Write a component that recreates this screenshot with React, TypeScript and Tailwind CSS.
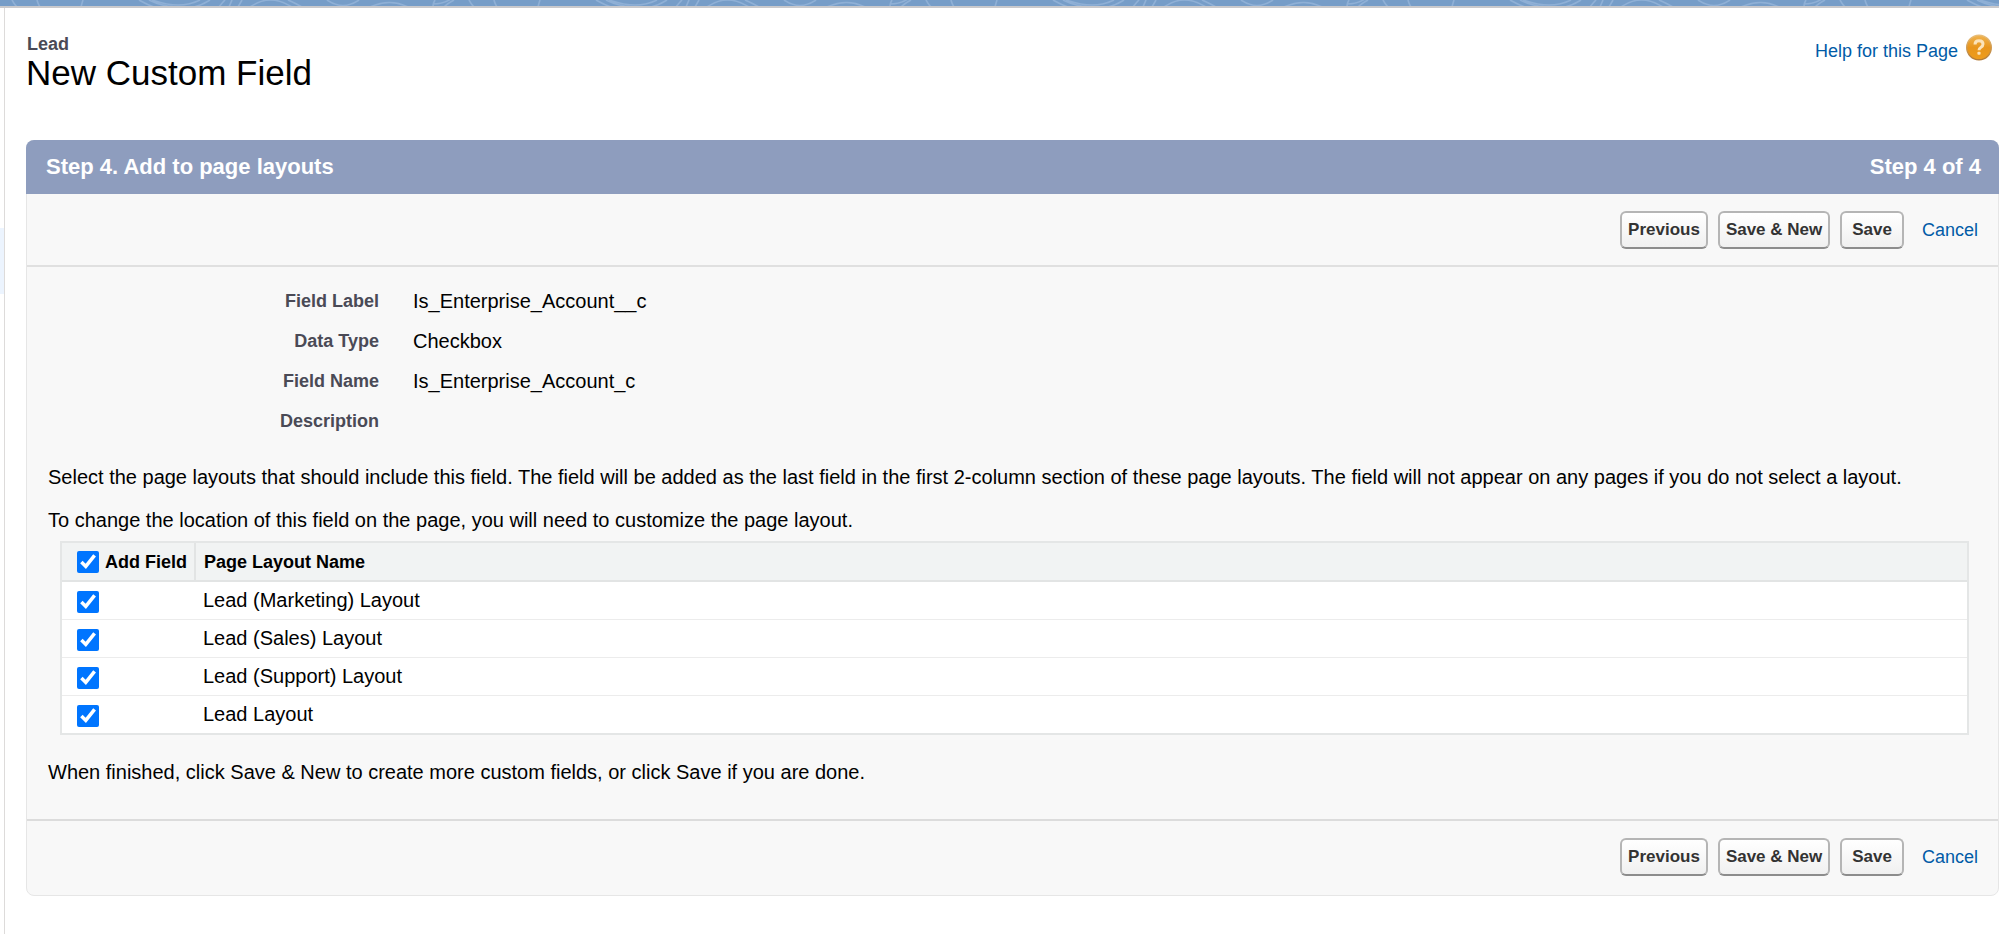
import { useState } from "react";

const details = [
  { label: "Field Label", value: "Is_Enterprise_Account__c" },
  { label: "Data Type", value: "Checkbox" },
  { label: "Field Name", value: "Is_Enterprise_Account_c" },
  { label: "Description", value: "" },
];

const layouts = [
  "Lead (Marketing) Layout",
  "Lead (Sales) Layout",
  "Lead (Support) Layout",
  "Lead Layout",
];

const Banner = () => (
  <svg className="block h-2 w-full border-b-2 border-[#c9c9cc] bg-[#769dc8]" aria-hidden="true">
    <defs>
      <pattern id="contours" width="457" height="6" patternUnits="userSpaceOnUse">
        <g fill="none" stroke="#8fb0d6" strokeWidth="1.6">
          <path d="M12 0q2 4 5 7M37 0q1 4 3 7M83 0q-1 3-2 7" />
          <path d="M139 0q9 5 15 7M149 0q14 7 30 7M152 0q28 10 48 0M210 0q-8 5-16 7M219 7q3-4 6-7M229 7l3-7M238 7l4-7" />
          <path d="M250 7q20-14 42 0M288 0q7 3 14 7M327 0q16 11 32 0M370 7q20-9 38 0" />
          <path d="M433 7q0-4 2-7M433 4q10 0 18-5M444 7q4-4 10-7" />
        </g>
      </pattern>
    </defs>
    <rect width="100%" height="6" fill="url(#contours)" />
  </svg>
);

const HelpIcon = () => (
  <svg width="26" height="27" viewBox="0 0 26 27" aria-hidden="true">
    <defs>
      <linearGradient id="help" x1="0" y1="0" x2="0" y2="1">
        <stop offset="0" stopColor="#f0b450" />
        <stop offset="0.5" stopColor="#e8951c" />
        <stop offset="1" stopColor="#ef9d1c" />
      </linearGradient>
      <linearGradient id="help-rim" x1="0" y1="0" x2="0" y2="1">
        <stop offset="0" stopColor="#e9bd76" />
        <stop offset="1" stopColor="#b37a35" />
      </linearGradient>
    </defs>
    <circle cx="13" cy="13.5" r="12.3" fill="url(#help)" stroke="url(#help-rim)" strokeWidth="1.4" />
    <path d="M9 10.5q0-3.8 4-3.8t4 3.4q0 2-2 3.2t-2 3" fill="none" stroke="#fbe3ba" strokeWidth="3" />
    <rect x="11.4" y="17.8" width="3.2" height="3" rx="1" fill="#fbe3ba" />
  </svg>
);

const buttonClass =
  "h-[38px] rounded-md border-2 border-[#b5b5b5] border-b-[#8c8c8c] bg-linear-to-b from-white to-[#f0f0f0] text-[17px] leading-5 font-bold text-[#333]";

const ButtonRow = () => (
  <div className="flex items-center justify-end pr-5">
    <button type="button" className={`${buttonClass} mr-2.5 px-1.5`}>Previous</button>
    <button type="button" className={`${buttonClass} mr-2.5 px-1.5`}>Save &amp; New</button>
    <button type="button" className={`${buttonClass} mr-[18px] px-2.5`}>Save</button>
    <a href="#" className="text-lg leading-5 text-[#015ba7]">Cancel</a>
  </div>
);

const App = () => {
  const [checked, setChecked] = useState<boolean[]>(layouts.map(() => true));
  const allChecked = checked.every(Boolean);

  return (
    <div className="min-h-screen bg-white font-['Liberation_Sans',Arial,sans-serif] text-black">
      <Banner />
      <div className="flex min-h-[calc(100vh-8px)]">
        {/* Edge of the setup tree */}
        <div className="w-[5px] shrink-0 border-r border-[#dddbda] pt-[220px]">
          <div className="h-[66px] bg-[#ecf4fe]" />
        </div>

        <main className="min-w-0 flex-1 pl-[21px]">
          <header className="flex items-start justify-between pt-[26px] pr-[7px] pb-12">
            <div>
              <h2 className="pl-px text-lg leading-5 font-bold text-[#4a4a56]">Lead</h2>
              <h1 className="text-[35px] leading-[38px]">New Custom Field</h1>
            </div>
            <a href="#" className="flex items-start gap-2 text-lg leading-5 text-[#015ba7]">
              <span className="pt-[7px]">Help for this Page</span>
              <HelpIcon />
            </a>
          </header>

          <section className="rounded-lg border border-[#e6e6e6] bg-[#f8f8f8]">
            <div className="-mx-px -mt-px flex h-[54px] items-center justify-between rounded-t-lg bg-[#8e9dbe] pr-[18px] pl-5 text-[22px] leading-6 font-bold text-white">
              <h3>Step 4. Add to page layouts</h3>
              <span>Step 4 of 4</span>
            </div>

            <div className="border-b-2 border-[#e0e0e0] pt-[17px] pb-4">
              <ButtonRow />
            </div>

            <div className="px-[21px] pt-3.5 pb-[35px]">
              <dl className="mb-6 grid grid-cols-[331px_1fr] gap-x-[34px]">
                {details.map((d) => (
                  <div key={d.label} className="contents">
                    <dt className="h-10 pt-2 text-right text-lg leading-6 font-bold text-[#4a4a56]">{d.label}</dt>
                    <dd className="h-10 pt-2 text-xl leading-6">{d.value}</dd>
                  </div>
                ))}
              </dl>

              <p className="mb-[19px] text-xl leading-6">
                Select the page layouts that should include this field. The field will be added as the last field in
                the first 2-column section of these page layouts. The field will not appear on any pages if you do not
                select a layout.
              </p>
              <p className="mb-[9px] text-xl leading-6">
                To change the location of this field on the page, you will need to customize the page layout.
              </p>

              <div className="mr-2 ml-3 border-2 border-[#e4e6e6] bg-white">
                <table className="w-full border-collapse text-left text-xl leading-6">
                  <thead>
                    <tr className="h-[38px] border-b-2 border-[#e2e4e4] bg-[#f1f3f3] text-lg leading-6">
                      <th className="w-[133px] border-r-2 border-[#e2e4e4] pl-[15px]">
                        <label className="flex items-center gap-1.5 whitespace-nowrap">
                          <input
                            type="checkbox"
                            className="size-[22px] shrink-0 accent-[#0075ff]"
                            checked={allChecked}
                            onChange={() => setChecked(layouts.map(() => !allChecked))}
                          />
                          Add Field
                        </label>
                      </th>
                      <th className="pl-2">Page Layout Name</th>
                    </tr>
                  </thead>
                  <tbody>
                    {layouts.map((name, i) => (
                      <tr key={name} className="h-[38px] border-b border-[#ececec] last:border-b-0">
                        <td className="pt-1 pl-[15px]">
                          <input
                            id={`layout-${i}`}
                            type="checkbox"
                            className="block size-[22px] accent-[#0075ff]"
                            checked={checked[i]}
                            onChange={() => setChecked(checked.map((c, j) => (j === i ? !c : c)))}
                          />
                        </td>
                        <td className="pl-2">
                          <label htmlFor={`layout-${i}`}>{name}</label>
                        </td>
                      </tr>
                    ))}
                  </tbody>
                </table>
              </div>

              <p className="mt-[25px] text-xl leading-6">
                When finished, click Save &amp; New to create more custom fields, or click Save if you are done.
              </p>
            </div>

            <div className="border-t-2 border-[#dcdcdc] pt-[17px] pb-[19px]">
              <ButtonRow />
            </div>
          </section>
        </main>
      </div>
    </div>
  );
};

export default App;
